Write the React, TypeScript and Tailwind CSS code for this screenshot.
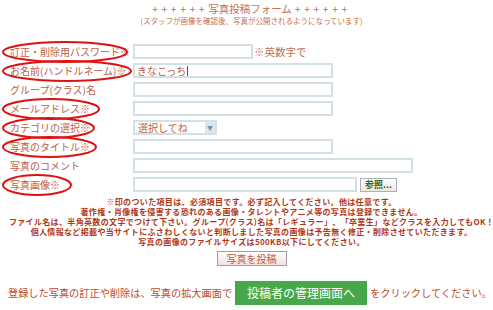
import React from 'react';

const jp = { fontFamily: '"Noto Sans CJK JP", "Noto Sans", sans-serif' };

type Row = {
  label: string;
  ring?: number; // ellipse width
  kind: 'short' | 'mid' | 'long' | 'select' | 'file';
  value?: string;
  suffix?: string;
};

const rows: Row[] = [
  { label: '訂正・削除用パスワード※', ring: 126, kind: 'short', suffix: '※英数字で' },
  { label: 'お名前(ハンドルネーム)※', ring: 130, kind: 'mid', value: 'きなこっち' },
  { label: 'グループ(クラス)名', kind: 'mid' },
  { label: 'メールアドレス※', ring: 98, kind: 'mid' },
  { label: 'カテゴリの選択※', ring: 93, kind: 'select' },
  { label: '写真のタイトル※', ring: 95, kind: 'mid' },
  { label: '写真のコメント', kind: 'long' },
  { label: '写真画像※', ring: 70, kind: 'file' },
];

const Ellipse: React.FC<{ w: number }> = ({ w }) => (
  <svg
    className="absolute left-[2px] top-[-3px] pointer-events-none overflow-visible"
    width={w}
    height={22}
  >
    <ellipse cx={w / 2} cy={11} rx={w / 2 - 1} ry={10} fill="none" stroke="#e01010" strokeWidth={2} />
  </svg>
);

const inputCls = 'h-[15px] border-2 border-[#d4e0e8] bg-white text-[10px] leading-[11px] text-[#b8604a] px-[2px]';

const Field: React.FC<{ row: Row }> = ({ row }) => {
  if (row.kind === 'select') {
    return (
      <div className="flex h-[15px] w-[84px] border-2 border-[#d4e0e8] bg-white">
        <span className="flex-1 pl-[3px] text-[10px] leading-[11px] text-[#b8604a]">選択してね</span>
        <span className="w-[10px] bg-[#dde6ec] flex items-center justify-center text-[6px] text-[#7890a0]">▼</span>
      </div>
    );
  }
  if (row.kind === 'file') {
    return (
      <div className="flex items-center gap-[3px]">
        <div className={inputCls + ' w-[224px]'} />
        <div className="h-[14px] w-[37px] border border-[#a8b0b8] bg-gradient-to-b from-white to-[#f3e4e0] text-[9px] leading-[12px] font-bold text-[#2f6a2f] text-center">
          参照...
        </div>
      </div>
    );
  }
  const w = row.kind === 'short' ? 'w-[120px]' : row.kind === 'mid' ? 'w-[200px]' : 'w-[280px] border-b-dotted';
  return (
    <div className="flex items-center">
      <div className={inputCls + ' ' + w + ' flex items-center'}>
        {row.value && (
          <>
            <span>{row.value}</span>
            <span className="ml-[1px] w-px h-[10px] bg-[#2f6a2f]" />
          </>
        )}
      </div>
      {row.suffix && <span className="ml-[1px] text-[10.5px] text-[#c07058]">{row.suffix}</span>}
    </div>
  );
};

export default function App() {
  return (
    <div className="w-[493px] h-[310px] bg-white overflow-hidden" style={jp}>
      <div className="w-[503px] pt-[2px] text-center text-[#c87050]">
        <div className="text-[10.5px] leading-[13px]">
          <span className="tracking-[3.5px]">++++++</span>写真投稿フォーム<span className="tracking-[3.5px] pl-[3px]">++++++</span>
        </div>
        <div className="text-[7.5px] leading-[12px]">(スタッフが画像を確認後、写真が公開されるようになっています)</div>
      </div>

      <div className="mt-[15px] flex flex-col">
        {rows.map((row) => (
          <div key={row.label} className="flex items-center h-[19px]">
            <div className="relative w-[133px] pl-[10px] text-[10px] leading-[15px] text-[#b8604a] whitespace-nowrap">
              {row.ring && <Ellipse w={row.ring} />}
              {row.label}
            </div>
            <Field row={row} />
          </div>
        ))}
      </div>

      <div className="w-[503px] mt-[3px] text-center text-[8px] tracking-[0.35px] leading-[10px] font-bold text-[#b03818] whitespace-nowrap">
        <div>※印のついた項目は、必須項目です。必ず記入してください。他は任意です。</div>
        <div>著作権・肖像権を侵害する恐れのある画像・タレントやアニメ等の写真は登録できません。</div>
        <div>ファイル名は、半角英数の文字でつけて下さい。グループ(クラス)名は「レギュラー」、「卒業生」などクラスを入力してもOK！</div>
        <div>個人情報など掲載や当サイトにふさわしくないと判断しました写真の画像は予告無く修正・削除させていただきます。</div>
        <div>写真の画像のファイルサイズは500KB以下にしてください。</div>
      </div>

      <div className="w-[503px] mt-[4px] flex justify-center">
        <div className="h-[15px] w-[70px] border border-[#9aa0a8] bg-gradient-to-b from-white to-[#f6e2dc] text-[10px] leading-[13px] text-[#b8604a] text-center">
          写真を投稿
        </div>
      </div>

      <div className="mt-[15px] flex items-center pl-[8px] text-[10.2px] text-[#c04a28] whitespace-nowrap">
        <span>登録した写真の訂正や削除は、写真の拡大画面で</span>
        <span className="mx-[3px] h-[24px] w-[132px] bg-[#46a84a] text-white text-[12px] leading-[24px] text-center">投稿者の管理画面へ</span>
        <span>をクリックしてください。</span>
      </div>
    </div>
  );
}
